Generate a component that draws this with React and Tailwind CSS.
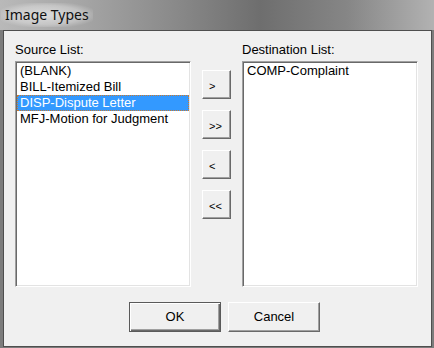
import React from "react";

const font = { fontFamily: '"Liberation Sans", Arial, sans-serif' };

function ListBox({ items, selected }) {
  return (
    <div className="w-[176px] h-[226px] bg-white border border-t-[#a0a0a0] border-l-[#a0a0a0] border-b-white border-r-white shadow-[inset_1px_1px_0_#696969,inset_-1px_-1px_0_#e3e3e3] p-[1px]">
      <div className="flex flex-col">
        {items.map((it, i) => (
          <div
            key={i}
            className={
              "h-[16px] leading-[16px] pl-[3px] text-[13px] whitespace-nowrap " +
              (i === selected
                ? "bg-[#3399ff] text-white outline outline-1 outline-dotted outline-[#cc7a2c] -outline-offset-1"
                : "text-black")
            }
          >
            {it}
          </div>
        ))}
      </div>
    </div>
  );
}

function ArrowBtn({ label }) {
  return (
    <div className="w-[29px] h-[29px] bg-[#f0f0f0] border border-t-white border-l-white border-r-[#696969] border-b-[#696969] shadow-[inset_-1px_-1px_0_#a0a0a0] flex items-center justify-start pl-[6px] pt-[3px] text-[11px] text-black leading-none">
      {label}
    </div>
  );
}

export default function App() {
  return (
    <div
      className="w-[434px] h-[348px] bg-[#7c7c7c] flex flex-col overflow-hidden"
      style={font}
    >
      <div className="h-[30px] w-full bg-[linear-gradient(90deg,#b9b9b9_0%,#a4a4a4_20%,#8a8a8a_40%,#6e6e6e_60%,#868686_80%,#b2b2b2_100%)] flex items-start">
        <span
          className="ml-[1px] mt-[3px] px-[4px] h-[24px] leading-[24px] text-[14px] text-[#101010] bg-[radial-gradient(ellipse_at_center,rgba(255,255,255,0.55)_0%,rgba(255,255,255,0.3)_55%,rgba(255,255,255,0)_80%)]"
          style={{ fontFamily: '"Noto Sans", "Open Sans", sans-serif' }}
        >
          Image Types
        </span>
      </div>
      <div className="ml-[3px] w-[429px] h-[317px] border border-[#4e4e4e] bg-[#f0f0f0] flex flex-col pl-[11px] pt-[11px]">
        <div className="flex">
          <div className="flex flex-col w-[176px]">
            <div className="h-[16px] leading-[16px] text-[13px] text-black mb-[3px]">Source List:</div>
            <ListBox
              items={["(BLANK)", "BILL-Itemized Bill", "DISP-Dispute Letter", "MFJ-Motion for Judgment"]}
              selected={2}
            />
          </div>
          <div className="flex flex-col ml-[11px] pt-[28px] gap-[11px]">
            <ArrowBtn label=">" />
            <ArrowBtn label=">>" />
            <ArrowBtn label="<" />
            <ArrowBtn label="<<" />
          </div>
          <div className="flex flex-col w-[176px] ml-[11px]">
            <div className="h-[16px] leading-[16px] text-[13px] text-black mb-[3px]">Destination List:</div>
            <ListBox items={["COMP-Complaint"]} selected={-1} />
          </div>
        </div>
        <div className="flex gap-[7px] pl-[114px] mt-[15px]">
          <div className="w-[92px] h-[30px] bg-[#f0f0f0] border border-[#5a5a5a] shadow-[inset_1px_1px_0_#ffffff,inset_-1px_-1px_0_#696969,inset_-2px_-2px_0_#a0a0a0] flex items-center justify-center text-[13px] text-black">
            OK
          </div>
          <div className="w-[92px] h-[30px] bg-[#f0f0f0] border border-t-white border-l-white border-r-[#696969] border-b-[#696969] shadow-[inset_-1px_-1px_0_#a0a0a0] flex items-center justify-center text-[13px] text-black">
            Cancel
          </div>
        </div>
      </div>
    </div>
  );
}
